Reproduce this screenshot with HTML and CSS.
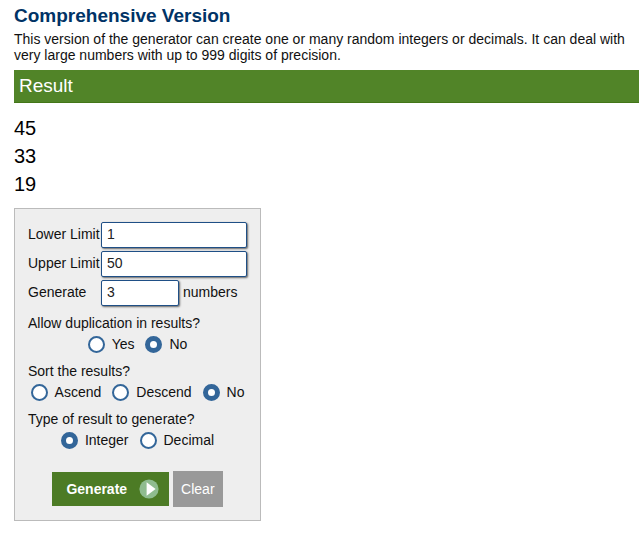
FILE: index.html
```html
<!DOCTYPE html>
<html lang="en">
<head>
<meta charset="utf-8">
<title>Random Number Generator - Comprehensive Version</title>
<link rel="stylesheet" href="styles.css">
</head>
<body>
<main class="page">
  <h2 class="title">Comprehensive Version</h2>
  <p class="intro">This version of the generator can create one or many random integers or decimals. It can deal with very large numbers with up to 999 digits of precision.</p>
  <h2 class="result-title">Result</h2>
  <div class="results">
    <div>45</div>
    <div>33</div>
    <div>19</div>
  </div>
  <form class="panel">
    <div class="fields">
      <label for="lower">Lower Limit</label>
      <input class="field" id="lower" type="text" value="1">
      <label for="upper">Upper Limit</label>
      <input class="field" id="upper" type="text" value="50">
      <label for="count">Generate</label>
      <div class="count"><input class="field field-short" id="count" type="text" value="3"><label for="count">numbers</label></div>
    </div>
    <fieldset class="group">
      <legend>Allow duplication in results?</legend>
      <div class="options">
        <label class="option"><input type="radio" name="dup">Yes</label>
        <label class="option"><input type="radio" name="dup" checked>No</label>
      </div>
    </fieldset>
    <fieldset class="group">
      <legend>Sort the results?</legend>
      <div class="options">
        <label class="option"><input type="radio" name="sort">Ascend</label>
        <label class="option"><input type="radio" name="sort">Descend</label>
        <label class="option"><input type="radio" name="sort" checked>No</label>
      </div>
    </fieldset>
    <fieldset class="group">
      <legend>Type of result to generate?</legend>
      <div class="options">
        <label class="option"><input type="radio" name="type" checked>Integer</label>
        <label class="option"><input type="radio" name="type">Decimal</label>
      </div>
    </fieldset>
    <div class="actions">
      <button class="button generate" type="button">Generate
        <svg width="20" height="20" viewBox="0 0 20 20" aria-hidden="true"><circle cx="10" cy="10" r="9.6" fill="#8fbc8f"/><path d="M7.6 3.2v13.6L16.6 10z" fill="#fff"/></svg>
      </button>
      <button class="button clear" type="reset">Clear</button>
    </div>
  </form>
</main>
</body>
</html>
```
FILE: styles.css
```css
* {
  box-sizing: border-box;
}

body {
  margin: 0;
  background: #fff;
  color: #111;
  font: 14px/16px "Liberation Sans", Arial, sans-serif;
}

.page {
  padding: 5px 1px 16px 14px;
}

.title {
  margin: 0 0 4px;
  color: #003366;
  font-size: 19px;
  line-height: 22px;
}

.intro {
  margin: 0 0 7px;
}

.result-title {
  margin: 0;
  padding: 0 5px;
  background: #518428;
  border-bottom: 1px solid #437618;
  color: #fff;
  font-size: 19px;
  font-weight: normal;
  line-height: 32px;
}

.results {
  padding: 11px 0 10px;
  color: #000;
  font-size: 20px;
  line-height: 28px;
}

.panel {
  width: fit-content;
  padding: 13px;
  background: #eee;
  border: 1px solid #bbb;
}

.fields {
  display: grid;
  grid-template-columns: 73px 146px;
  align-items: center;
  row-gap: 3px;
  margin-bottom: 9px;
}

.fields label {
  padding-bottom: 2px;
}

.field {
  width: 100%;
  height: 26px;
  padding: 0 5px 2px;
  background: #fff;
  border: 1px solid #1f4f86;
  border-radius: 2px;
  box-shadow: 1px 1px 2px #666;
  color: #222;
  font: inherit;
}

.count {
  display: flex;
  align-items: center;
  gap: 4px;
}

.field-short {
  width: 78px;
}

.group {
  margin: 0 0 6px;
  padding: 0;
  border: 0;
}

.group legend {
  padding: 0;
}

.options {
  display: flex;
  justify-content: center;
  gap: 11px;
  height: 26px;
}

.option {
  display: flex;
  align-items: center;
  gap: 7px;
}

.option input {
  appearance: none;
  width: 17px;
  height: 17px;
  margin: 0;
  background: #fff;
  border: 2px solid #369;
  border-radius: 50%;
}

.option input:checked {
  border-width: 5px;
}

.actions {
  display: flex;
  align-items: center;
  justify-content: center;
  gap: 4px;
  padding-top: 12px;
}

.button {
  display: flex;
  align-items: center;
  border: 0;
  color: #fff;
  font: inherit;
}

.generate {
  gap: 12px;
  height: 34px;
  padding: 0 10px 0 14px;
  background: #4c7b25;
  font-weight: bold;
}

.clear {
  height: 36px;
  padding: 0 8px;
  background: #999;
}
```
